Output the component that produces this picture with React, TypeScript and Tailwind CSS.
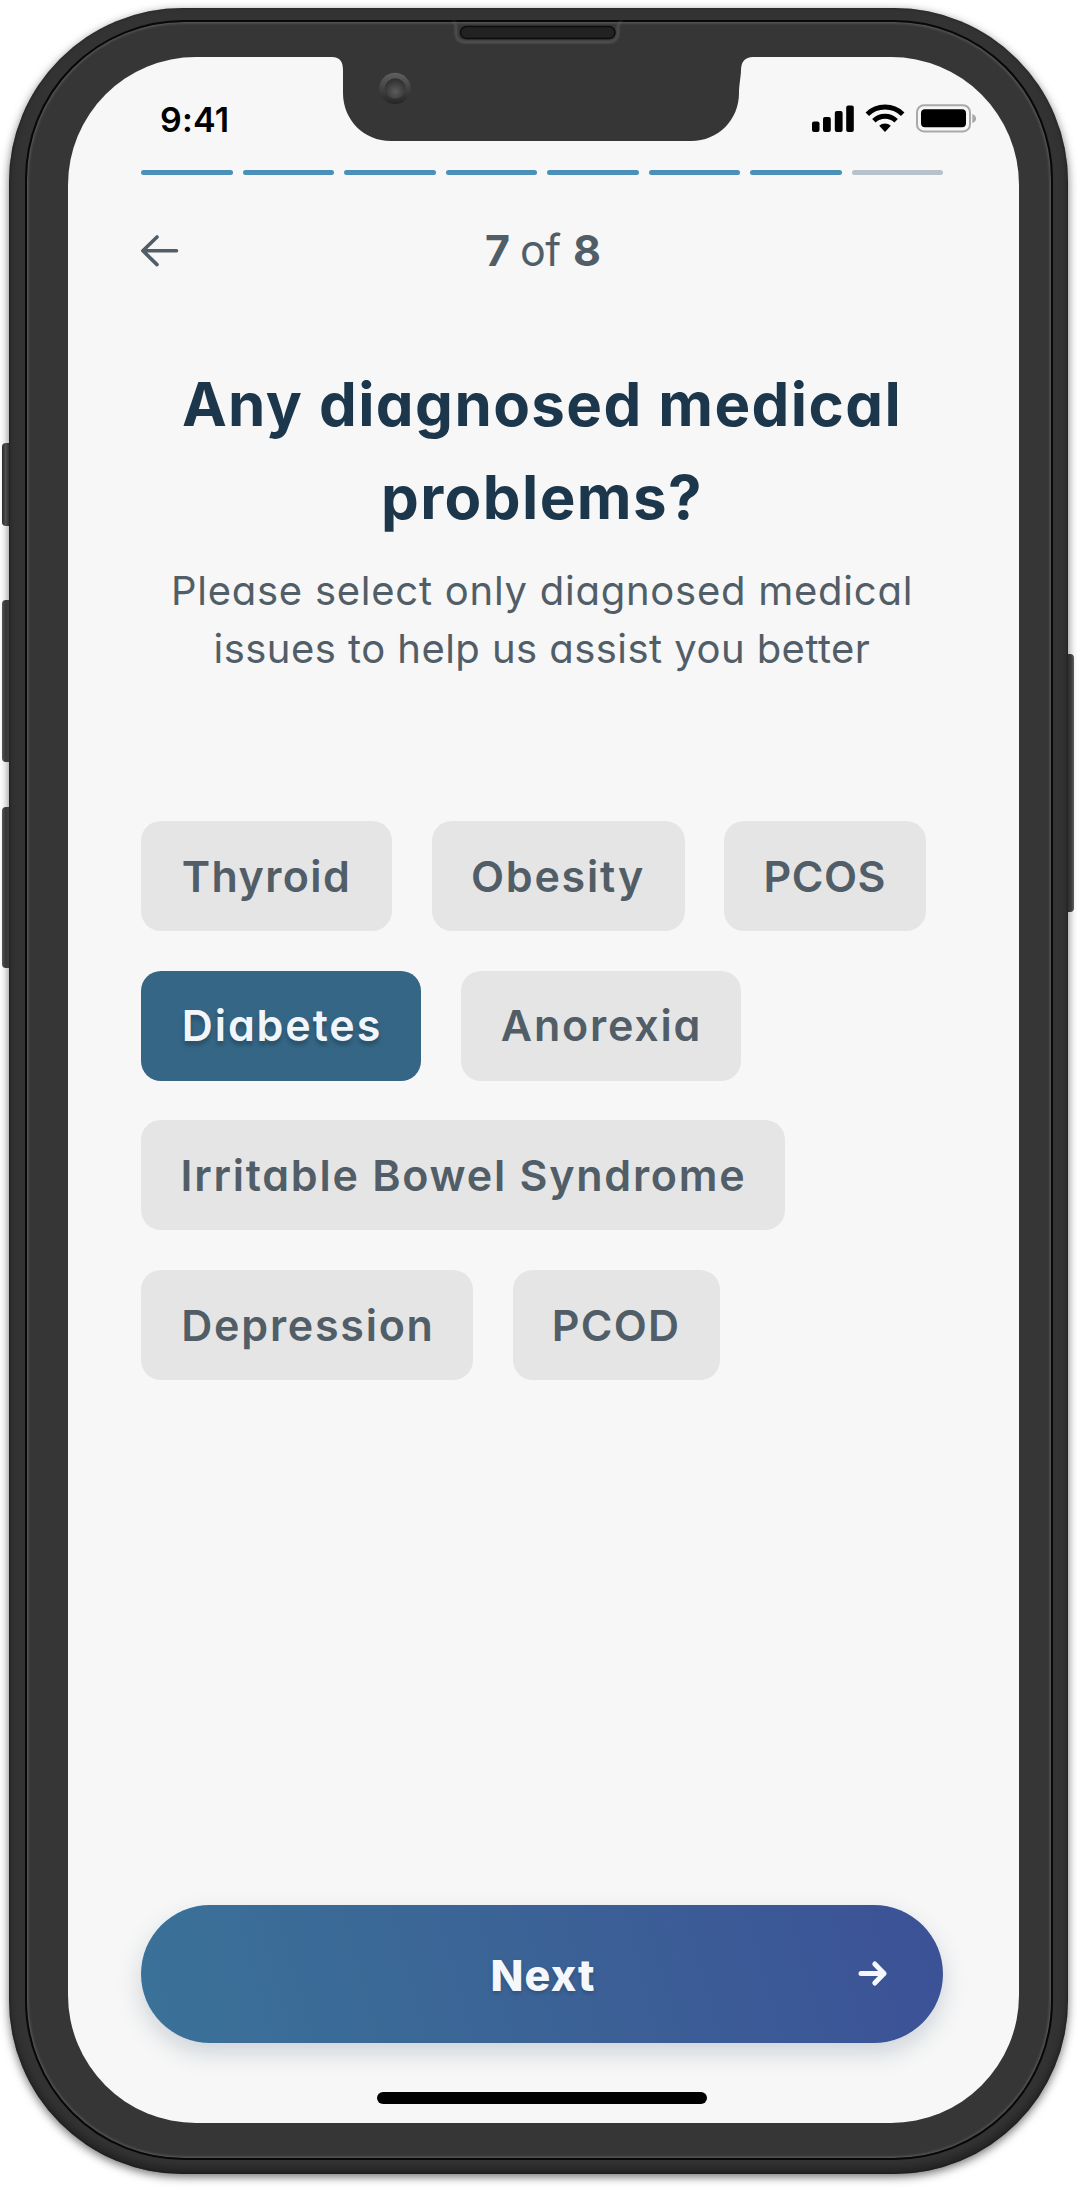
import type { ReactNode } from "react";

type Problem = { label: string; className: string; selected?: boolean };

const problemRows: Problem[][] = [
  [
    { label: "Thyroid", className: "w-[251px] tracking-[1.4px]" },
    { label: "Obesity", className: "w-[253px] tracking-[1.8px]" },
    { label: "PCOS", className: "w-[201.500px] tracking-[0.5px]" },
  ],
  [
    { label: "Diabetes", className: "w-[280px] pl-[2px] tracking-[1.9px]", selected: true },
    { label: "Anorexia", className: "w-[280px] pl-[2px] tracking-[1.8px]" },
  ],
  [{ label: "Irritable Bowel Syndrome", className: "w-[644px] pl-[1px] tracking-[1.75px]" }],
  [
    { label: "Depression", className: "w-[332px] pl-[2px] tracking-[1.75px]" },
    { label: "PCOD", className: "w-[207px] tracking-[1.2px]" },
  ],
];

function Chip({ problem }: { problem: Problem }) {
  const tone = problem.selected
    ? "bg-[#356685] text-[#f1f6fb] [text-shadow:0_4px_4px_rgba(0,0,0,0.25)]"
    : "bg-[#e5e5e5] text-[#525e67]";
  return (
    <button
      className={`flex h-[110px] shrink-0 items-center justify-center whitespace-nowrap rounded-[20px] text-[43px] font-semibold ${tone} ${problem.className}`}
    >
      {problem.label}
    </button>
  );
}

function StatusBar() {
  return (
    <div className="flex h-[113px] shrink-0 items-start pl-[92.500px] pr-[43px] pt-[43px]">
      <span className="text-[34px] font-semibold leading-[40px] tracking-[0.2px] text-black">9:41</span>
      <svg className="ml-auto mt-[3px]" width="166" height="32" viewBox="0 0 166 32">
        <rect x="2" y="18.5" width="7.5" height="10.5" rx="2" />
        <rect x="13" y="14" width="7.8" height="15" rx="2" />
        <rect x="24.8" y="8" width="7.8" height="21" rx="2" />
        <rect x="36.2" y="2.5" width="7.6" height="26.5" rx="2" />
        <g fill="none" stroke="#000" strokeWidth="5">
          <path d="M57.3 11.2a25.5 25.5 0 0 1 35.4 0" />
          <path d="M63.9 17.8a16 16 0 0 1 22.2 0" />
        </g>
        <path d="M69.2 22.8a8.6 8.6 0 0 1 11.6 0L75 28.9z" />
        <rect x="107" y="2.2" width="53" height="26.2" rx="7" fill="none" stroke="#a9a9a9" strokeWidth="2" />
        <rect x="111" y="6.3" width="45" height="18" rx="4" />
        <path d="M162.3 11c5 1.7 5 7.3 0 9z" fill="#a9a9a9" />
      </svg>
    </div>
  );
}

function PhoneHardware() {
  return (
    <svg
      className="pointer-events-none absolute left-[320px] top-[20px]"
      width="444"
      height="124"
      viewBox="320 20 444 124"
    >
      <defs>
        <linearGradient id="lensRing" x1="0" y1="0" x2="0" y2="1">
          <stop offset="0" stopColor="#606060" />
          <stop offset="1" stopColor="#252525" />
        </linearGradient>
        <radialGradient id="lens" cx="0.5" cy="0.65" r="0.6">
          <stop offset="0" stopColor="#5c5c5c" />
          <stop offset="1" stopColor="#303030" />
        </radialGradient>
        <filter id="soft" x="-5%" y="-50%" width="110%" height="200%">
          <feGaussianBlur stdDeviation="0.8" />
        </filter>
      </defs>
      <path
        d="M332 56V57C340 57 343 62 343 70V93C343 120 364 141 391 141H691C718 141 739 120 739 93C739 85 741 76 741 70C741 62 745 57 753 57V56Z"
        fill="#363636"
      />
      <path
        d="M453 22C456 23 456 25 456 29V33C456 39 459 42 465 42H609C615 42 618 39 618 33V29C618 25 618 23 622 22"
        fill="none"
        stroke="#5c5c5c"
        strokeWidth="1.800"
        filter="url(#soft)"
      />
      <rect x="460.500" y="26.500" width="154.500" height="12" rx="6" fill="#222" stroke="#0c0c0c" strokeWidth="1.400" />
      <circle cx="395" cy="88.500" r="15.700" fill="url(#lensRing)" />
      <circle cx="395.300" cy="88.500" r="10.300" fill="url(#lens)" />
    </svg>
  );
}

function SideButton({ className }: { className: string }) {
  return <div className={`absolute ${className}`} />;
}

function PhoneFrame({ children }: { children: ReactNode }) {
  return (
    <div className="relative h-[2192px] w-[1077px] overflow-hidden bg-white pl-[9px] pt-[8px]">
      <div className="h-[2166px] w-[1059px] rounded-[174px] bg-[#333] pb-[14px] pl-[16px] pr-[15px] pt-[12px] shadow-[0_3px_10px_rgba(0,0,0,0.55),inset_0_-6px_8px_rgba(0,0,0,0.35),inset_0_0_2px_rgba(0,0,0,0.6)]">
        <div className="h-full w-full rounded-[159px] border-2 border-[#080808] bg-[#363636] pb-[35.500px] pl-[40.500px] pr-[32px] pt-[35px] shadow-[inset_0_0_3px_1px_#606060]">
          {children}
        </div>
      </div>
      <SideButton className="left-[2px] top-[443px] h-[83px] w-[7px] rounded-l-[4px] bg-linear-to-r from-[#2a2a2a] via-[#505050] to-[#303030]" />
      <SideButton className="left-[2px] top-[600px] h-[162px] w-[7px] rounded-l-[4px] bg-linear-to-r from-[#555] via-[#383838] to-[#3e3e3e]" />
      <SideButton className="left-[2px] top-[807px] h-[161px] w-[7px] rounded-l-[4px] bg-linear-to-r from-[#555] via-[#383838] to-[#3e3e3e]" />
      <SideButton className="left-[1068px] top-[654px] h-[258px] w-[6px] rounded-r-[4px] bg-linear-to-r from-[#303030] via-[#383838] to-[#606060]" />
      <PhoneHardware />
    </div>
  );
}

export default function App() {
  return (
    <PhoneFrame>
      <main className="flex h-full w-full flex-col overflow-hidden rounded-[128px] bg-[#f7f7f7] font-['Inter',sans-serif] text-[#525e67] [font-feature-settings:'cv11']">
        <StatusBar />
        <div className="flex grow flex-col pb-[19px] pl-[73.500px] pr-[76px]">
          <div className="flex gap-[10px]">
            {Array.from({ length: 8 }, (_, i) => (
              <div key={i} className={`h-[5px] flex-1 rounded-full ${i < 7 ? "bg-[#4a90b9]" : "bg-[#b8c2cb]"}`} />
            ))}
          </div>

          <header className="mt-[45px] flex h-[60px] items-center">
            <svg
              width="40"
              height="34"
              viewBox="0 0 40 34"
              fill="none"
              stroke="#525e67"
              strokeWidth="3.600"
              strokeLinecap="round"
              strokeLinejoin="round"
            >
              <path d="M35.500 17.800H1.900M16 4L1.900 17.800 16 31.600" />
            </svg>
            <div className="ml-[304px] flex text-[43px] leading-[60px]">
              <span className="w-[35px] font-bold">7</span>
              <span className="w-[53px] tracking-[-0.5px]">of</span>
              <span className="font-bold">8</span>
            </div>
          </header>

          <h1 className="mt-[78px] whitespace-nowrap text-center text-[60px] font-bold leading-[93px] tracking-[1.4px] text-[#1c374b]">
            Any diagnosed medical
            <br />
            problems?
          </h1>
          <p className="mt-[17.500px] whitespace-nowrap text-center text-[40px] leading-[58.500px] tracking-[0.75px]">
            Please select only diagnosed medical
            <br />
            <span className="tracking-[0.45px]">issues to help us assist you better</span>
          </p>

          <div className="mt-[142.500px] flex flex-col gap-[39.700px]">
            {problemRows.map((row, i) => (
              <div key={i} className="flex gap-[39.500px]">
                {row.map((problem) => (
                  <Chip key={problem.label} problem={problem} />
                ))}
              </div>
            ))}
          </div>

          <button className="relative mb-[49px] mt-auto flex h-[137.500px] w-full items-center justify-center rounded-full bg-[linear-gradient(75deg,#3a7298_0%,#3b6496_45%,#3c5196_100%)] text-[43px] font-extrabold tracking-[1.100px] text-[#f4f8fc] shadow-[0_10px_24px_rgba(40,70,100,0.2)]">
            <span className="pl-[2px] pt-[3px] [text-shadow:0_2px_4px_rgba(0,0,0,0.2)]">Next</span>
            <svg
              className="absolute right-[53px] top-[54px]"
              width="34"
              height="30"
              viewBox="0 0 34 30"
              fill="none"
              stroke="currentColor"
              strokeWidth="5"
              strokeLinecap="round"
              strokeLinejoin="round"
            >
              <path d="M5 14.500H28M18.800 5L28 14.500 18.800 24" />
            </svg>
          </button>
          <div className="h-[12px] w-[330px] self-center rounded-full bg-black" />
        </div>
      </main>
    </PhoneFrame>
  );
}
